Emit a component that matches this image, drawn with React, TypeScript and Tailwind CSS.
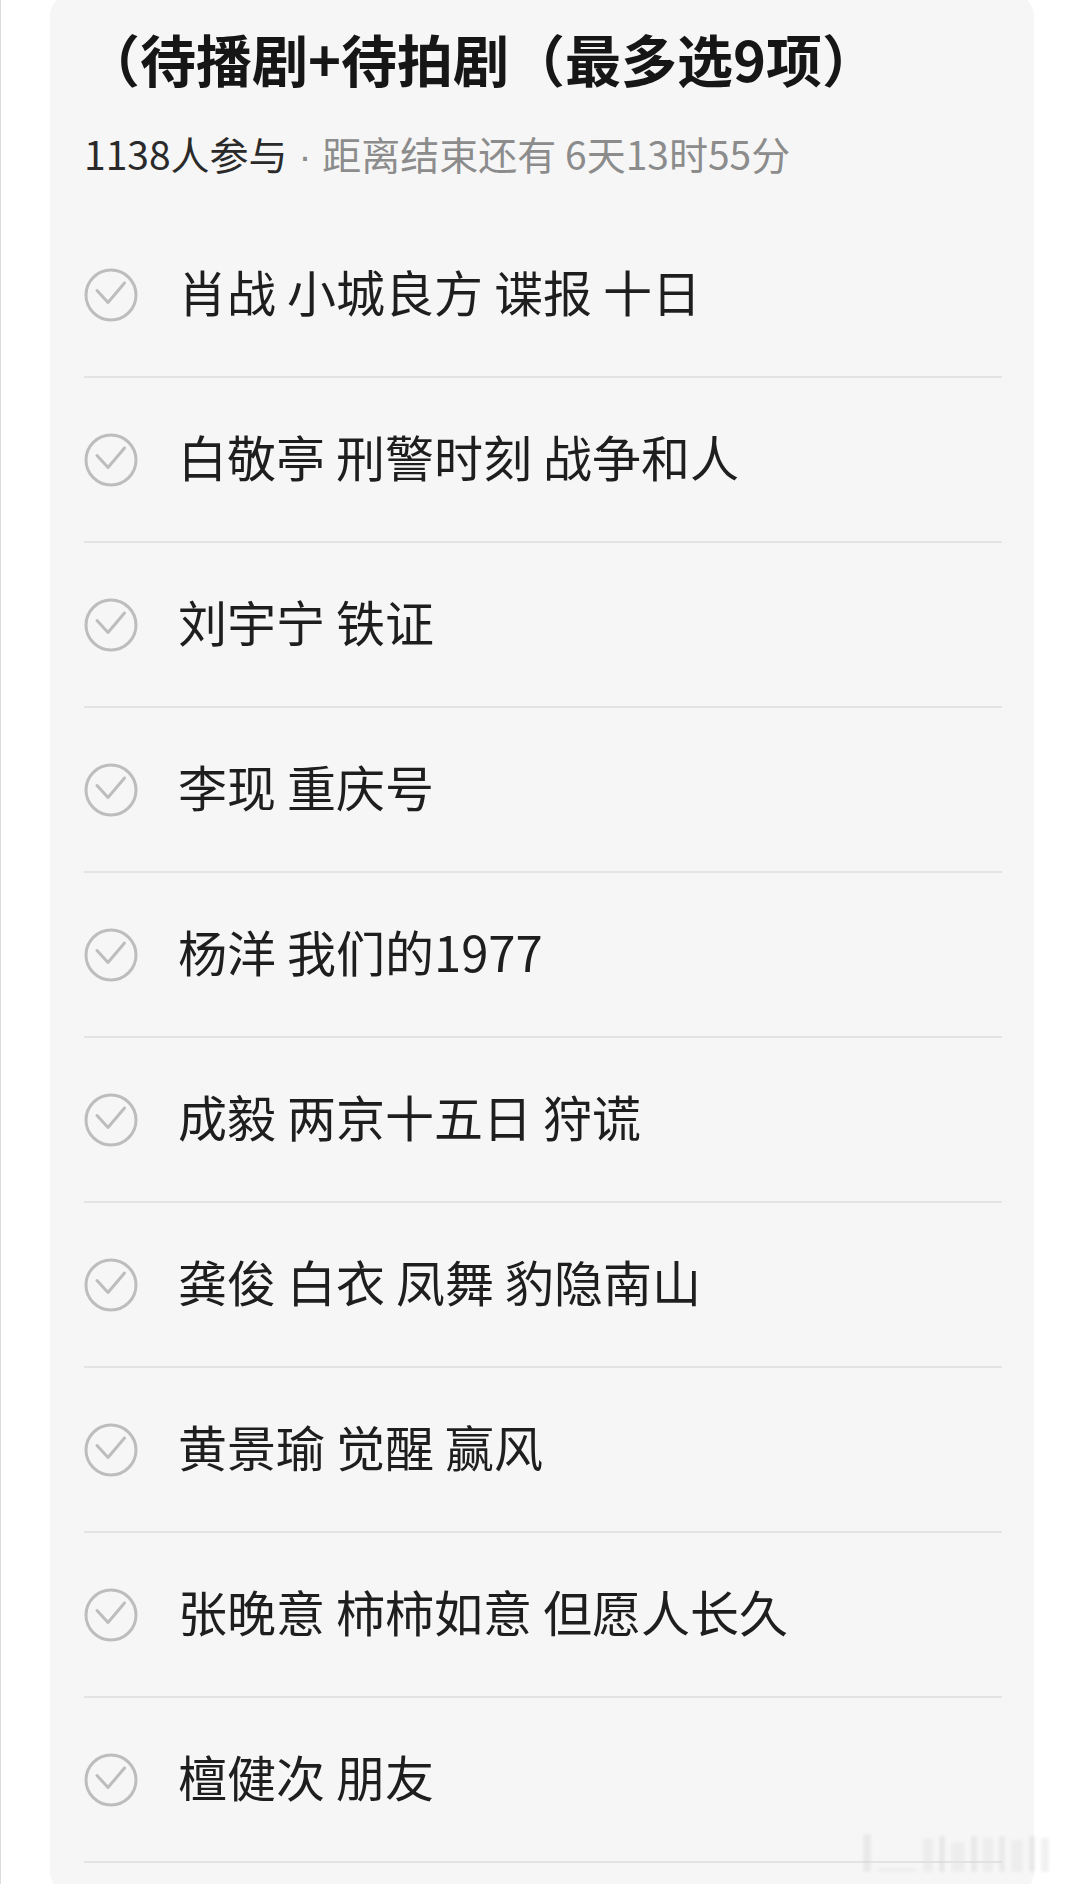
import React from 'react';

const options = [
  '肖战 小城良方 谍报 十日',
  '白敬亭 刑警时刻 战争和人',
  '刘宇宁 铁证',
  '李现 重庆号',
  '杨洋 我们的1977',
  '成毅 两京十五日 狩谎',
  '龚俊 白衣 凤舞 豹隐南山',
  '黄景瑜 觉醒 赢风',
  '张晚意 柿柿如意 但愿人长久',
  '檀健次 朋友',
];

const CheckCircle: React.FC = () => (
  <svg width="54" height="54" viewBox="0 0 54 54" fill="none" className="shrink-0">
    <circle cx="27" cy="27" r="25" stroke="#bdbdbd" strokeWidth="3" />
    <path d="M13 22.5 L24 34.5 L40.5 15" stroke="#bdbdbd" strokeWidth="3" strokeLinecap="round" strokeLinejoin="round" />
  </svg>
);

const App: React.FC = () => {
  return (
    <div
      className="relative w-[1080px] h-[1884px] overflow-hidden bg-white border-l border-[#dcdcdc]"
      style={{ fontFamily: '"Noto Sans CJK SC", "Noto Sans", sans-serif' }}
    >
      <div className="ml-[49px] mt-[-6px] w-[984px] h-[1900px] bg-[#f6f6f6] rounded-[22px] pl-[34px] pr-[32px]">
        {/* Header */}
        <h1 className="pt-[28px] text-[56px] leading-[72px] font-bold text-[#161616]">
          （待播剧+待拍剧（最多选9项）
        </h1>
        <p className="mt-[35px] h-[48px] text-[39px] leading-[48px] text-[#2a2a2a]">
          1138人参与
          <span className="text-[#8c8c8c]">
            <span className="font-['Liberation_Sans',sans-serif] leading-none"> · </span>距离结束还有 6天13时55分
          </span>
        </p>

        {/* Options */}
        <ul className="mt-[36px]">
          {options.map((text, index) => (
            <li
              key={index}
              className="h-[165px] flex items-center border-b-[2px] border-[#e3e3e3]"
            >
              <CheckCircle />
              <span className="ml-[40px] mb-[9px] text-[49px] text-[#1e1e1e] leading-none">{text}</span>
            </li>
          ))}
        </ul>
      </div>

      {/* watermark */}
      <div className="absolute left-[862px] top-[1834px] flex items-end gap-[6px] opacity-40 blur-[1.5px]">
        <div className="w-[8px] h-[38px] bg-[#d8d8d8]" />
        <div className="w-[40px] h-[4px] bg-[#e4e4e4]" />
        <div className="w-[10px] h-[34px] bg-[#e0e0e0]" />
        <div className="w-[6px] h-[36px] bg-[#d4d4d4]" />
        <div className="w-[14px] h-[30px] bg-[#e2e2e2]" />
        <div className="w-[6px] h-[36px] bg-[#d6d6d6]" />
        <div className="w-[10px] h-[34px] bg-[#e0e0e0]" />
        <div className="w-[6px] h-[36px] bg-[#d8d8d8]" />
        <div className="w-[12px] h-[32px] bg-[#e2e2e2]" />
        <div className="w-[6px] h-[36px] bg-[#d6d6d6]" />
        <div className="w-[8px] h-[34px] bg-[#dedede]" />
      </div>
    </div>
  );
};

export default App;
